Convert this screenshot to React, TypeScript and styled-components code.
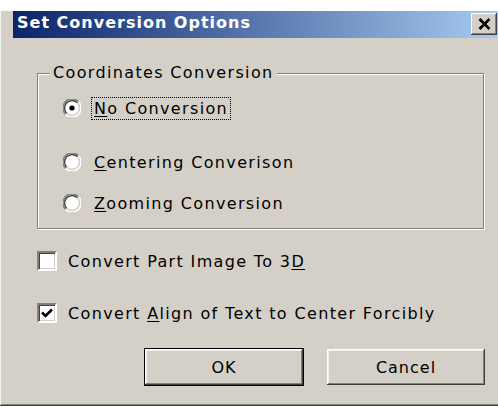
import * as React from 'react';
import styled, { createGlobalStyle } from 'styled-components';

const Global = createGlobalStyle`
    html, body {
        margin: 0;
        padding: 0;
        background: #fff;
    }
    body {
        font-family: "DejaVu Sans", Verdana, sans-serif;
        overflow: hidden;
    }
`;

const Page = styled.div`
    width: 498px;
    height: 407px;
    display: flex;
    flex-direction: column;
    overflow: hidden;
`;

// strip of the page showing above the window
const Gap = styled.div`
    height: 11px;
    background: #fff;
    flex-shrink: 0;
`;

const Window = styled.div`
    box-sizing: border-box;
    width: 510px;
    height: 395px;
    background: #d4d0c8;
    padding-left: 13px;
    display: flex;
    flex-direction: column;
    border-bottom: 1px solid #404040;
    box-shadow: inset 1px 0 0 #f4f3f0, inset 0 -1px 0 #808080;
`;

const TitleBar = styled.div`
    height: 27px;
    width: 485px;
    flex-shrink: 0;
    display: flex;
    align-items: flex-start;
    background: linear-gradient(to right, #0a246a, #a6caf0);
`;

const Title = styled.div`
    font-family: "DejaVu Sans", Verdana, sans-serif;
    font-weight: bold;
    font-size: 16px;
    line-height: 19px;
    letter-spacing: 1px;
    padding: 2px 0 0 4px;
    color: #fff;
    white-space: nowrap;
`;

const CloseButton = styled.div`
    box-sizing: border-box;
    width: 26px;
    height: 22px;
    margin: 2px 1px 0 auto;
    background: #d4d0c8;
    display: flex;
    align-items: center;
    justify-content: center;
    box-shadow: inset -1px -1px 0 #404040, inset 1px 1px 0 #fff,
        inset -2px -2px 0 #808080;
`;

const Client = styled.div`
    display: flex;
    flex-direction: column;
    align-items: flex-start;
    padding: 35px 0 0 24px;
    font-size: 16px;
    letter-spacing: 1.35px;
    color: #000;
`;

const Group = styled.div`
    position: relative;
    box-sizing: border-box;
    width: 447px;
    height: 156px;
    border: 1px solid #808080;
    box-shadow: inset 1px 1px 0 #fff, 1px 1px 0 #fff;
    display: flex;
    flex-direction: column;
    padding: 22px 0 0 25px;
`;

const GroupLabel = styled.div`
    position: absolute;
    top: -11px;
    left: 12px;
    padding: 0 3px;
    background: #d4d0c8;
    white-space: nowrap;
`;

const RadioRow = styled.div<{ $gap: number }>`
    display: flex;
    align-items: center;
    height: 24px;
    margin-top: ${(p) => p.$gap}px;
    white-space: nowrap;
`;

const RadioLabel = styled.span<{ $focused?: boolean }>`
    margin-left: 10px;
    padding: 1px 2px;
    border: 1px dotted ${(p) => (p.$focused ? '#000' : 'transparent')};
`;

const CheckRow = styled.div<{ $gap: number }>`
    display: flex;
    align-items: center;
    height: 24px;
    margin-top: ${(p) => p.$gap}px;
    white-space: nowrap;
`;

const CheckBox = styled.div`
    box-sizing: border-box;
    width: 20px;
    height: 20px;
    background: #fff;
    border: 2px solid;
    border-color: #808080 #fff #fff #808080;
    box-shadow: inset 1px 1px 0 #404040, inset -1px -1px 0 #d4d0c8;
    display: flex;
    align-items: center;
    justify-content: center;
    margin-right: 11px;
`;

const Key = styled.span`
    text-decoration: underline;
    text-underline-offset: 2px;
`;

const ButtonRow = styled.div`
    display: flex;
    gap: 22px;
    margin: 23px 0 0 107px;
`;

const Button = styled.div<{ $default?: boolean }>`
    box-sizing: border-box;
    width: 160px;
    height: 38px;
    display: flex;
    align-items: center;
    justify-content: center;
    border: 1px solid ${(p) => (p.$default ? '#000' : '#d4d0c8')};
    box-shadow: inset -1px -1px 0 #404040, inset 1px 1px 0 #fff,
        inset -2px -2px 0 #808080, inset 2px 2px 0 #f0efec;
    letter-spacing: 1px;
`;

const Radio = ({ checked }: { checked?: boolean }) => (
    <svg width="18" height="18" viewBox="0 0 18 18">
        <path d="M2.6 15.4 A9 9 0 0 1 15.4 2.6" fill="none" stroke="#808080" strokeWidth="1.5" />
        <path d="M15.4 2.6 A9 9 0 0 1 2.6 15.4" fill="none" stroke="#fff" strokeWidth="1.5" />
        <path d="M3.7 14.3 A7.5 7.5 0 0 1 14.3 3.7" fill="none" stroke="#404040" strokeWidth="1.5" />
        <path d="M14.3 3.7 A7.5 7.5 0 0 1 3.7 14.3" fill="none" stroke="#d4d0c8" strokeWidth="1.5" />
        <circle cx="9" cy="9" r="6.6" fill="#fff" />
        {checked && <circle cx="9" cy="9" r="2.6" fill="#000" />}
    </svg>
);

const Check = () => (
    <svg width="14" height="14" viewBox="0 0 14 14">
        <path d="M2 6.5 L5.5 10 L12 3.5" fill="none" stroke="#000" strokeWidth="2.6" />
    </svg>
);

const CloseGlyph = () => (
    <svg width="13" height="12" viewBox="0 0 13 12">
        <path d="M1.5 1 L11.5 11 M11.5 1 L1.5 11" stroke="#000" strokeWidth="2.6" />
    </svg>
);

export default function App() {
    return (
        <Page>
            <Global />
            <Gap />
            <Window>
                <TitleBar>
                    <Title>Set Conversion Options</Title>
                    <CloseButton>
                        <CloseGlyph />
                    </CloseButton>
                </TitleBar>
                <Client>
                    <Group>
                        <GroupLabel>Coordinates Conversion</GroupLabel>
                        <RadioRow $gap={0}>
                            <Radio checked />
                            <RadioLabel $focused>
                                <Key>N</Key>o Conversion
                            </RadioLabel>
                        </RadioRow>
                        <RadioRow $gap={30}>
                            <Radio />
                            <RadioLabel>
                                <Key>C</Key>entering Converison
                            </RadioLabel>
                        </RadioRow>
                        <RadioRow $gap={17}>
                            <Radio />
                            <RadioLabel>
                                <Key>Z</Key>ooming Conversion
                            </RadioLabel>
                        </RadioRow>
                    </Group>
                    <CheckRow $gap={20}>
                        <CheckBox />
                        <span>
                            Convert Part Image To 3<Key>D</Key>
                        </span>
                    </CheckRow>
                    <CheckRow $gap={28}>
                        <CheckBox>
                            <Check />
                        </CheckBox>
                        <span>
                            Convert <Key>A</Key>lign of Text to Center Forcibly
                        </span>
                    </CheckRow>
                    <ButtonRow>
                        <Button $default>OK</Button>
                        <Button>Cancel</Button>
                    </ButtonRow>
                </Client>
            </Window>
        </Page>
    );
}
